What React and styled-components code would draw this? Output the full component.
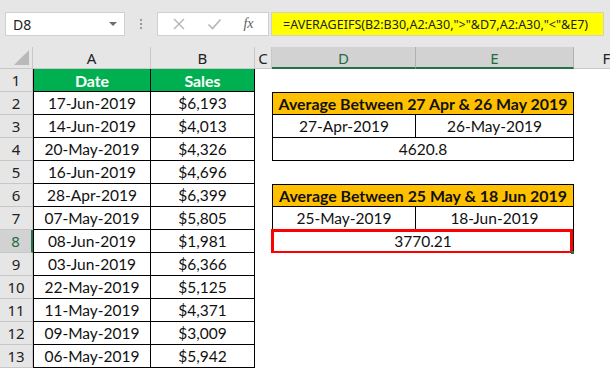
import styled, { createGlobalStyle } from 'styled-components';

const GlobalStyle = createGlobalStyle`
  html, body {
    margin: 0;
    padding: 0;
    background: #ffffff;
  }
  body {
    width: 610px;
    height: 370px;
    overflow: hidden;
  }
`;

const Window = styled.div`
  width: 610px;
  height: 370px;
  overflow: hidden;
  background: #ffffff;
`;

const Toolbar = styled.div`
  height: 47px;
  background: #e6e6e6;
  display: flex;
  align-items: flex-start;
  padding: 12px 0 0 5px;
  box-sizing: border-box;
`;

const NameBox = styled.div`
  width: 120px;
  height: 24px;
  box-sizing: border-box;
  background: #ffffff;
  border: 1px solid #d0d0d0;
  display: flex;
  align-items: center;
  justify-content: space-between;
  padding: 0 7px 0 7px;
  font-family: 'Noto Sans', 'Open Sans', sans-serif;
  font-size: 14px;
  color: #222;
`;

const DropArrow = styled.span`
  width: 0;
  height: 0;
  border-left: 4px solid transparent;
  border-right: 4px solid transparent;
  border-top: 4px solid #6d6d6d;
`;

const Dots = styled.div`
  width: 32px;
  height: 24px;
  display: flex;
  flex-direction: column;
  align-items: center;
  justify-content: center;
  gap: 2px;

  span {
    width: 2px;
    height: 2px;
    background: #9a9a9a;
  }
`;

const FxBox = styled.div`
  width: 112px;
  height: 24px;
  box-sizing: border-box;
  background: #ffffff;
  border: 1px solid #d0d0d0;
  display: flex;
  align-items: center;
  justify-content: space-around;
  padding: 0 4px;
  margin-right: 2px;
`;

const FxLabel = styled.span`
  font-family: 'Liberation Serif', serif;
  font-style: italic;
  font-size: 14px;
  color: #606060;
`;

const FormulaBar = styled.div`
  width: 333px;
  height: 24px;
  box-sizing: border-box;
  background: #ffff00;
  border: 1px solid #d0d0d0;
  display: flex;
  align-items: center;
  padding-left: 11px;
  font-family: 'Noto Sans', 'Open Sans', sans-serif;
  font-size: 12.5px;
  color: #222;
  white-space: nowrap;
  overflow: hidden;
`;

const Sheet = styled.div`
  display: grid;
  grid-template-columns: 33px 118px 104px 17px 144px 158px 66px;
  grid-template-rows: 22px repeat(13, 23px);
  width: 640px;
`;

const Corner = styled.div`
  background: #e6e6e6;
  border-right: 1px solid #c8c8c8;
  border-bottom: 1px solid #c8c8c8;
  box-sizing: border-box;
  position: relative;

  &::after {
    content: '';
    position: absolute;
    right: 3px;
    bottom: 3px;
    width: 0;
    height: 0;
    border-left: 15px solid transparent;
    border-bottom: 15px solid #b9b9b9;
  }
`;

const ColHead = styled.div`
  background: ${({ $selected }) => ($selected ? '#d2d2d2' : '#e6e6e6')};
  color: ${({ $selected }) => ($selected ? '#1f6b45' : '#222')};
  border-right: 1px solid ${({ $selected }) => ($selected ? '#b0b0b0' : '#c8c8c8')};
  border-bottom: ${({ $selected }) => ($selected ? '2px solid #217346' : '1px solid #c8c8c8')};
  box-sizing: border-box;
  display: flex;
  align-items: center;
  justify-content: center;
  font-family: 'Noto Sans', 'Open Sans', sans-serif;
  font-size: 15px;
  padding-top: 1px;
`;

const RowHead = styled.div`
  background: ${({ $selected }) => ($selected ? '#d2d2d2' : '#e6e6e6')};
  color: ${({ $selected }) => ($selected ? '#1f6b45' : '#222')};
  border-right: ${({ $selected }) => ($selected ? '2px solid #217346' : '1px solid #c8c8c8')};
  border-bottom: 1px solid #c8c8c8;
  box-sizing: border-box;
  display: flex;
  align-items: center;
  justify-content: center;
  font-family: 'Noto Sans', 'Open Sans', sans-serif;
  font-size: 15px;
`;

const Cell = styled.div`
  grid-column: span ${({ $span }) => $span || 1};
  background: ${({ $fill }) => $fill || '#ffffff'};
  color: ${({ $color }) => $color || '#111'};
  font-weight: ${({ $bold }) => ($bold ? 700 : 400)};
  border-right: ${({ $box }) => ($box ? '1px solid #000' : 'none')};
  border-bottom: ${({ $box }) => ($box ? '1px solid #000' : 'none')};
  border-left: ${({ $left }) => ($left ? '1px solid #000' : 'none')};
  border-top: ${({ $top }) => ($top ? '1px solid #000' : 'none')};
  box-sizing: border-box;
  display: flex;
  align-items: center;
  justify-content: center;
  font-family: 'Lato', 'Liberation Sans', sans-serif;
  font-size: ${({ $bold }) => ($bold ? '15.9px' : '15.5px')};
  white-space: nowrap;
  position: relative;

  ${({ $active }) =>
    $active &&
    `
    &::after {
      content: '';
      position: absolute;
      top: -1px;
      left: -2px;
      right: 0;
      bottom: -2px;
      border: 3px solid #ff0000;
    }
    &::before {
      content: '';
      position: absolute;
      right: -1px;
      bottom: -2px;
      width: 3px;
      height: 3px;
      background: #217346;
      z-index: 2;
    }
  `}
`;

const sales = [
  ['17-Jun-2019', '$6,193'],
  ['14-Jun-2019', '$4,013'],
  ['20-May-2019', '$4,326'],
  ['16-Jun-2019', '$4,696'],
  ['28-Apr-2019', '$6,399'],
  ['07-May-2019', '$5,805'],
  ['08-Jun-2019', '$1,981'],
  ['03-Jun-2019', '$6,366'],
  ['22-May-2019', '$5,125'],
  ['11-May-2019', '$4,371'],
  ['09-May-2019', '$3,009'],
  ['06-May-2019', '$5,942'],
];

// right side content for each sheet row (index = row number - 1)
const side = {
  1: { type: 'title', text: 'Average Between 27 Apr & 26 May 2019' },
  2: { type: 'pair', a: '27-Apr-2019', b: '26-May-2019' },
  3: { type: 'value', text: '4620.8' },
  5: { type: 'title', text: 'Average Between 25 May & 18 Jun 2019' },
  6: { type: 'pair', a: '25-May-2019', b: '18-Jun-2019' },
  7: { type: 'value', text: '3770.21', active: true },
};

function SideCells({ item }) {
  if (!item) {
    return (
      <>
        <Cell />
        <Cell />
      </>
    );
  }
  if (item.type === 'title') {
    return (
      <Cell $span={2} $fill="#ffc000" $bold $box $left $top>
        {item.text}
      </Cell>
    );
  }
  if (item.type === 'pair') {
    return (
      <>
        <Cell $box $left>{item.a}</Cell>
        <Cell $box>{item.b}</Cell>
      </>
    );
  }
  return (
    <Cell $span={2} $box $left $active={item.active}>
      {item.text}
    </Cell>
  );
}

function CrossIcon() {
  return (
    <svg width="14" height="14" viewBox="0 0 14 14">
      <path d="M2 2 L12 12 M12 2 L2 12" stroke="#b4b4b4" strokeWidth="1.4" fill="none" />
    </svg>
  );
}

function CheckIcon() {
  return (
    <svg width="15" height="14" viewBox="0 0 15 14">
      <path d="M1.5 7.5 L5.5 11.5 L13.5 2.5" stroke="#b4b4b4" strokeWidth="1.6" fill="none" />
    </svg>
  );
}

export default function App() {
  const rows = [['Date', 'Sales'], ...sales];

  return (
    <Window>
      <GlobalStyle />
      <Toolbar>
        <NameBox>
          D8
          <DropArrow />
        </NameBox>
        <Dots>
          <span />
          <span />
          <span />
        </Dots>
        <FxBox>
          <CrossIcon />
          <CheckIcon />
          <FxLabel>fx</FxLabel>
        </FxBox>
        <FormulaBar>=AVERAGEIFS(B2:B30,A2:A30,"&gt;"&amp;D7,A2:A30,"&lt;"&amp;E7)</FormulaBar>
      </Toolbar>

      <Sheet>
        <Corner />
        <ColHead>A</ColHead>
        <ColHead>B</ColHead>
        <ColHead>C</ColHead>
        <ColHead $selected>D</ColHead>
        <ColHead $selected>E</ColHead>
        <ColHead>F</ColHead>

        {rows.map(([date, amount], i) => {
          const isHead = i === 0;
          return (
            <div key={i} style={{ display: 'contents' }}>
              <RowHead $selected={i === 7}>{i + 1}</RowHead>
              <Cell
                $box
                $left
                $fill={isHead ? '#00b050' : undefined}
                $color={isHead ? '#ffffff' : undefined}
                $bold={isHead}
              >
                {date}
              </Cell>
              <Cell
                $box
                $fill={isHead ? '#00b050' : undefined}
                $color={isHead ? '#ffffff' : undefined}
                $bold={isHead}
              >
                {amount}
              </Cell>
              <Cell />
              <SideCells item={side[i]} />
              <Cell />
            </div>
          );
        })}
      </Sheet>
    </Window>
  );
}
